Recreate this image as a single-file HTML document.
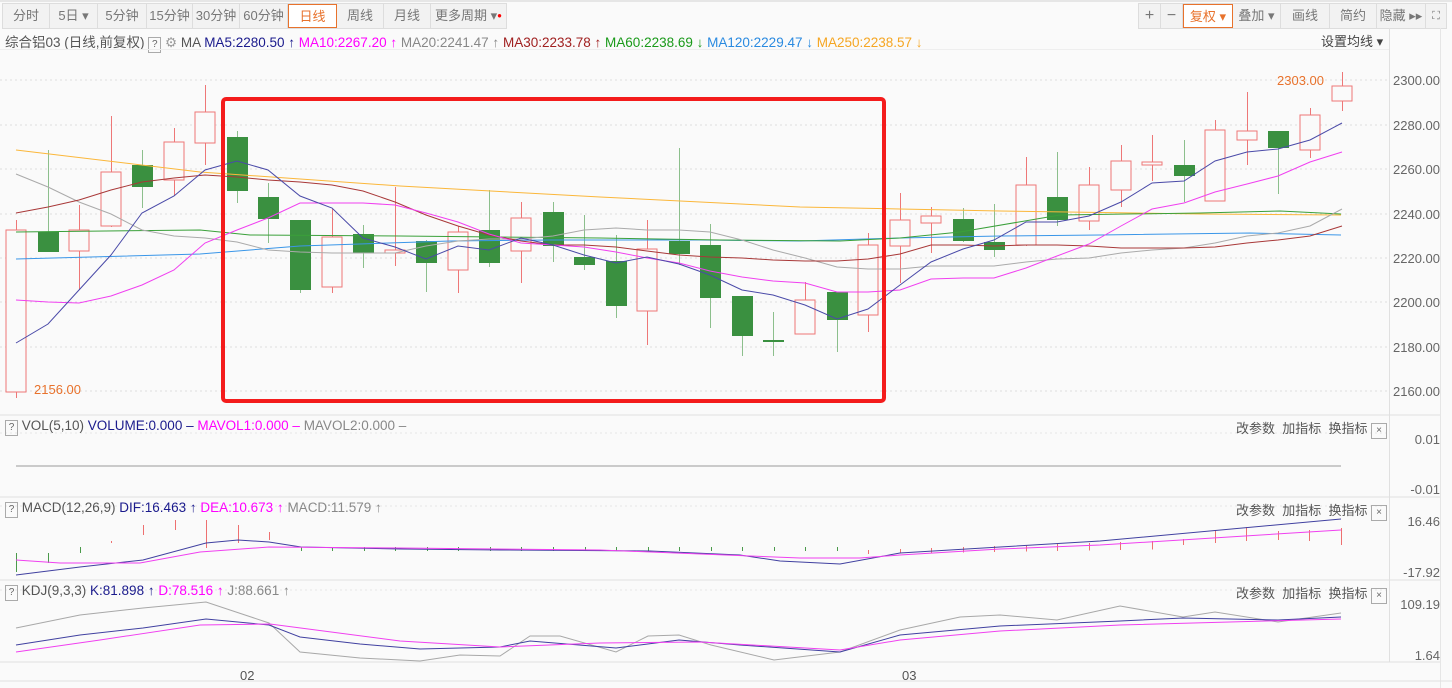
<!DOCTYPE html><html><head><meta charset="utf-8"><style>
body{margin:0;width:1452px;height:688px;overflow:hidden;background:#fafafa;font-family:"Liberation Sans","Noto Sans CJK SC",sans-serif;position:relative}
.tb{position:absolute;top:3px;height:24px;border:1px solid #ddd;background:#f2f2f2;white-space:nowrap}
.tb div{position:absolute;top:0;font-size:13px;color:#777;line-height:24px;text-align:center;border-right:1px solid #ddd;height:24px;box-sizing:border-box;white-space:nowrap}
.tb div.on{background:#fff;color:#e8722c;border:1px solid #e8722c}
.t{position:absolute;font-size:13.5px;white-space:nowrap}
.q{display:inline-block;border:1px solid #aaa;width:11px;height:14px;font-size:10px;text-align:center;line-height:14px;color:#666}
</style></head><body>
<div style="position:absolute;left:0;top:0;width:1452px;height:2px;background:#e6e6e6"></div>
<div class="tb" style="left:2px;width:503px">
<div style="left:0;width:47px">分时</div><div style="left:47px;width:48px">5日 ▾</div><div style="left:95px;width:49px">5分钟</div><div style="left:144px;width:46px">15分钟</div><div style="left:190px;width:47px">30分钟</div><div style="left:237px;width:48px">60分钟</div><div class="on" style="left:285px;width:49px">日线</div><div style="left:334px;width:47px">周线</div><div style="left:381px;width:47px">月线</div><div style="left:428px;width:75px;border:0">更多周期 ▾<span style="color:red;font-size:8px;vertical-align:top">●</span></div></div>
<div class="tb" style="left:1138px;width:307px">
<div style="left:0;width:22px;font-size:16px">+</div><div style="left:22px;width:22px;font-size:16px">−</div><div class="on" style="left:44px;width:50px">复权 ▾</div><div style="left:94px;width:48px">叠加 ▾</div><div style="left:142px;width:49px">画线</div><div style="left:191px;width:47px">简约</div><div style="left:238px;width:49px">隐藏 ▸▸</div><div style="left:287px;width:20px;border:0;font-size:11px">⛶</div></div>
<div class="t" style="left:5px;top:31px;color:#555">综合铝03 (日线,前复权) <span class="q">?</span> <span style="color:#999">⚙</span> <span style="color:#555">MA</span> <span style="color:#1a1a8c">MA5:2280.50 ↑</span> <span style="color:#f0f">MA10:2267.20 ↑</span> <span style="color:#888">MA20:2241.47 ↑</span> <span style="color:#a02020">MA30:2233.78 ↑</span> <span style="color:#1a9a1a">MA60:2238.69 ↓</span> <span style="color:#2a8ae0">MA120:2229.47 ↓</span> <span style="color:#f5a623">MA250:2238.57 ↓</span></div>
<div class="t" style="left:1321px;top:31px;color:#444;font-size:13px">设置均线 ▾</div>
<div style="position:absolute;left:0;top:49px;width:1389px;height:1px;background:#eee"></div>
<div style="position:absolute;left:1389px;top:28px;width:1px;height:634px;background:#e0e0e0"></div>
<div style="position:absolute;left:1440px;top:28px;width:1px;height:660px;background:#e6e6e6"></div>
<svg id="s" width="1452" height="688" style="position:absolute;left:0;top:0" font-family="Liberation Sans" font-size="13"></svg>
<div class="t" style="left:5px;top:418px;color:#555"><span class="q">?</span> VOL(5,10) <span style="color:#1a1a8c">VOLUME:0.000 –</span> <span style="color:#f0f">MAVOL1:0.000 –</span> <span style="color:#888">MAVOL2:0.000 –</span></div>
<div class="t" style="left:5px;top:500px;color:#555"><span class="q">?</span> MACD(12,26,9) <span style="color:#1a1a8c">DIF:16.463 ↑</span> <span style="color:#f0f">DEA:10.673 ↑</span> <span style="color:#888">MACD:11.579 ↑</span></div>
<div class="t" style="left:5px;top:583px;color:#555"><span class="q">?</span> KDJ(9,3,3) <span style="color:#1a1a8c">K:81.898 ↑</span> <span style="color:#f0f">D:78.516 ↑</span> <span style="color:#888">J:88.661 ↑</span></div>
<div class="t" style="left:1236px;top:418px;color:#555;font-size:13px">改参数 &nbsp;加指标 &nbsp;换指标 <span class="q" style="width:14px">×</span></div>
<div class="t" style="left:1236px;top:500px;color:#555;font-size:13px">改参数 &nbsp;加指标 &nbsp;换指标 <span class="q" style="width:14px">×</span></div>
<div class="t" style="left:1236px;top:583px;color:#555;font-size:13px">改参数 &nbsp;加指标 &nbsp;换指标 <span class="q" style="width:14px">×</span></div>
<div class="t" style="left:1277px;top:73px;color:#e8722c;font-size:13px">2303.00</div>
<div class="t" style="left:34px;top:382px;color:#e8722c;font-size:13px">2156.00</div>
<div class="t" style="left:240px;top:668px;color:#555;font-size:13px">02</div>
<div class="t" style="left:902px;top:668px;color:#555;font-size:13px">03</div>
<script>
var s=document.getElementById('s'),h='';
function L(x1,y1,x2,y2,c,w,d){h+='<line x1="'+x1+'" y1="'+y1+'" x2="'+x2+'" y2="'+y2+'" stroke="'+c+'" stroke-width="'+(w||1)+'"'+(d?' stroke-dasharray="'+d+'"':'')+'/>';}
function P(p,c,w){h+='<polyline fill="none" stroke="'+c+'" stroke-width="'+(w||1)+'" points="'+p.map(function(a){return a.join(',')}).join(' ')+'"/>';}
function T(x,y,t){h+='<text x="'+x+'" y="'+y+'" fill="#666" text-anchor="end">'+t+'</text>';}
var gy=[80,125,169,214,258,302,347,391],gl=['2300.00','2280.00','2260.00','2240.00','2220.00','2200.00','2180.00','2160.00'];
gy.forEach(function(y,i){L(0,y,1389,y,'#ddd',1,'2,3');T(1440,y+5,gl[i]);});
[415,497,580,662].forEach(function(y){L(0,y,1440,y,'#e0e0e0');});
[433,506,590].forEach(function(y){L(0,y,1389,y,'#e6e6e6',1,'2,3');});
T(1440,444,'0.01');T(1440,494,'-0.01');T(1440,526,'16.46');T(1440,577,'-17.92');T(1440,609,'109.19');T(1440,660,'1.64');
L(16,466,1341,466,'#999');
var C=[['r',230,392,220,398],['g',232,252,150,252],['r',230,251,205,290],['r',172,226,116,227],['g',165,187,150,208],['r',142,180,128,196],['r',112,143,85,165],['g',137,191,131,203],['g',197,219,183,243],['g',220,290,220,293],['r',237,287,209,293],['g',234,253,225,268],['r',250,253,187,266],['g',241,263,240,292],['r',232,270,226,293],['g',230,263,190,267],['r',218,251,202,283],['g',212,246,202,262],['g',257,265,215,270],['g',261,306,235,318],['r',249,311,220,345],['g',241,254,148,265],['g',245,298,224,328],['g',296,336,296,356],['g',340,341,312,356],['r',300,334,282,334],['g',292,320,292,352],['r',245,315,233,332],['r',220,246,193,283],['r',216,223,207,253],['g',219,241,208,242],['g',242,250,204,257],['r',185,245,157,246],['g',197,220,152,226],['r',185,221,167,230],['r',161,190,145,207],['r',162,165,135,181],['g',165,176,140,202],['r',130,201,120,201],['r',131,140,92,165],['g',131,148,131,194],['r',115,150,108,158],['r',86,101,72,111]];
var X=[];C.forEach(function(c,i){var x=Math.round(16+i*31.56);X.push(x);
L(x+.5,c[3],x+.5,c[4],c[0]=='r'?'#ee7777':'#8cbf8c');
if(c[0]=='r')h+='<rect x="'+(x-10)+'" y="'+c[1]+'" width="20" height="'+(c[2]-c[1])+'" fill="#fafafa" stroke="#ee7777"/>';
else h+='<rect x="'+(x-10)+'" y="'+c[1]+'" width="21" height="'+Math.max(2,c[2]-c[1])+'" fill="#3a9040"/>';});
function M(a){return a.map(function(y,i){return [X[i],y]});}
P([[16,150],[200,172],[400,186],[600,197],[800,207],[900,209],[1000,211],[1200,214],[1341,215]],'#fbb73a');
P([[16,259],[200,254],[300,246],[450,241],[550,240],[700,240],[800,241],[900,238],[1000,236],[1100,235],[1250,233],[1341,235]],'#3a96e8');
P([[16,232],[200,230],[250,235],[400,236],[600,238],[720,240],[840,241],[900,238],[960,232],[1060,215],[1200,213],[1280,211],[1341,214]],'#3aa03a');
P(M([174,187,202,214,230,236,238,242,250,252,253,253,253,246,241,239,239,236,230,228,230,230,232,240,250,258,267,269,269,266,266,266,262,259,258,253,250,248,243,236,233,226,209]),'#aaa');
P(M([213,207,200,190,182,178,175,177,180,182,185,191,202,215,226,235,241,245,245,247,251,255,257,258,260,261,261,259,254,245,245,246,245,245,246,248,248,248,247,243,240,236,226]),'#a83838');
P(M([300,302,303,296,285,270,243,230,218,203,203,203,205,213,222,234,243,245,247,252,258,263,271,277,281,283,292,292,290,279,278,278,268,256,244,226,209,203,192,184,176,162,152]),'#f040f0');
P(M([343,324,290,255,213,196,170,161,170,196,208,238,247,259,246,250,238,245,255,263,257,264,275,290,295,305,319,309,285,262,249,240,222,222,216,202,183,181,161,152,149,140,123]),'#4a4aa8');
h+='<rect x="223" y="99" width="661" height="302" rx="3" fill="none" stroke="#f41c1c" stroke-width="4"/>';
var hb=[[16,572,553,'g'],[48,563,553,'g'],[80,553,547,'g'],[111,543,541,'r'],[143,535,525,'r'],[175,530,520,'r'],[206,548,520,'r'],[238,543,525,'r'],[269,540,532,'r'],[1183,545,539,'r'],[1215,543,530,'r'],[1246,541,527,'r'],[1278,540,531,'r'],[1309,541,530,'r'],[1341,545,528,'r']];
hb.forEach(function(b){L(b[0]+.5,b[1],b[0]+.5,b[2],b[3]=='g'?'#4a9a4a':'#ee7070');});
[301,332,364,395,427,458,490,521,553,585,616,648,679,711,742,774,805,837].forEach(function(x){L(x+.5,547,x+.5,551,'#4a9a4a');});
[868,900,931,963,994,1026,1057,1089,1120,1152].forEach(function(x,i){L(x+.5,550-i,x+.5,554-i*0.5,'#ee7070');});
P([[16,575],[80,567],[143,560],[206,543],[238,540],[269,542],[301,547],[400,549],[500,550],[650,551],[740,555],[780,561],[840,564],[900,553],[1000,547],[1100,541],[1341,519]],'#4040a0');
P([[16,560],[60,563],[140,563],[200,552],[269,547],[400,548],[600,550],[800,558],[860,558],[900,555],[1000,549],[1100,545],[1341,530]],'#f040f0');
P([[16,628],[80,615],[143,608],[206,602],[269,623],[300,652],[360,658],[420,661],[460,655],[500,656],[530,636],[560,636],[616,652],[648,636],[679,635],[711,645],[774,660],[840,652],[900,630],[960,617],[1000,615],[1057,620],[1120,606],[1183,617],[1215,612],[1278,622],[1341,613]],'#a8a8a8');
P([[16,645],[80,635],[143,628],[206,619],[269,625],[300,637],[360,644],[420,649],[500,647],[530,641],[616,648],[679,640],[740,645],[840,652],[900,635],[1000,626],[1120,621],[1183,618],[1278,620],[1341,617]],'#4040a0');
P([[16,652],[100,640],[200,625],[270,624],[400,641],[500,647],[600,643],[700,642],[840,650],[900,640],[1000,631],[1120,625],[1341,619]],'#f040f0');
L(0,681,1452,681,'#e0e0e0');
s.innerHTML=h;
</script>
</body></html>
